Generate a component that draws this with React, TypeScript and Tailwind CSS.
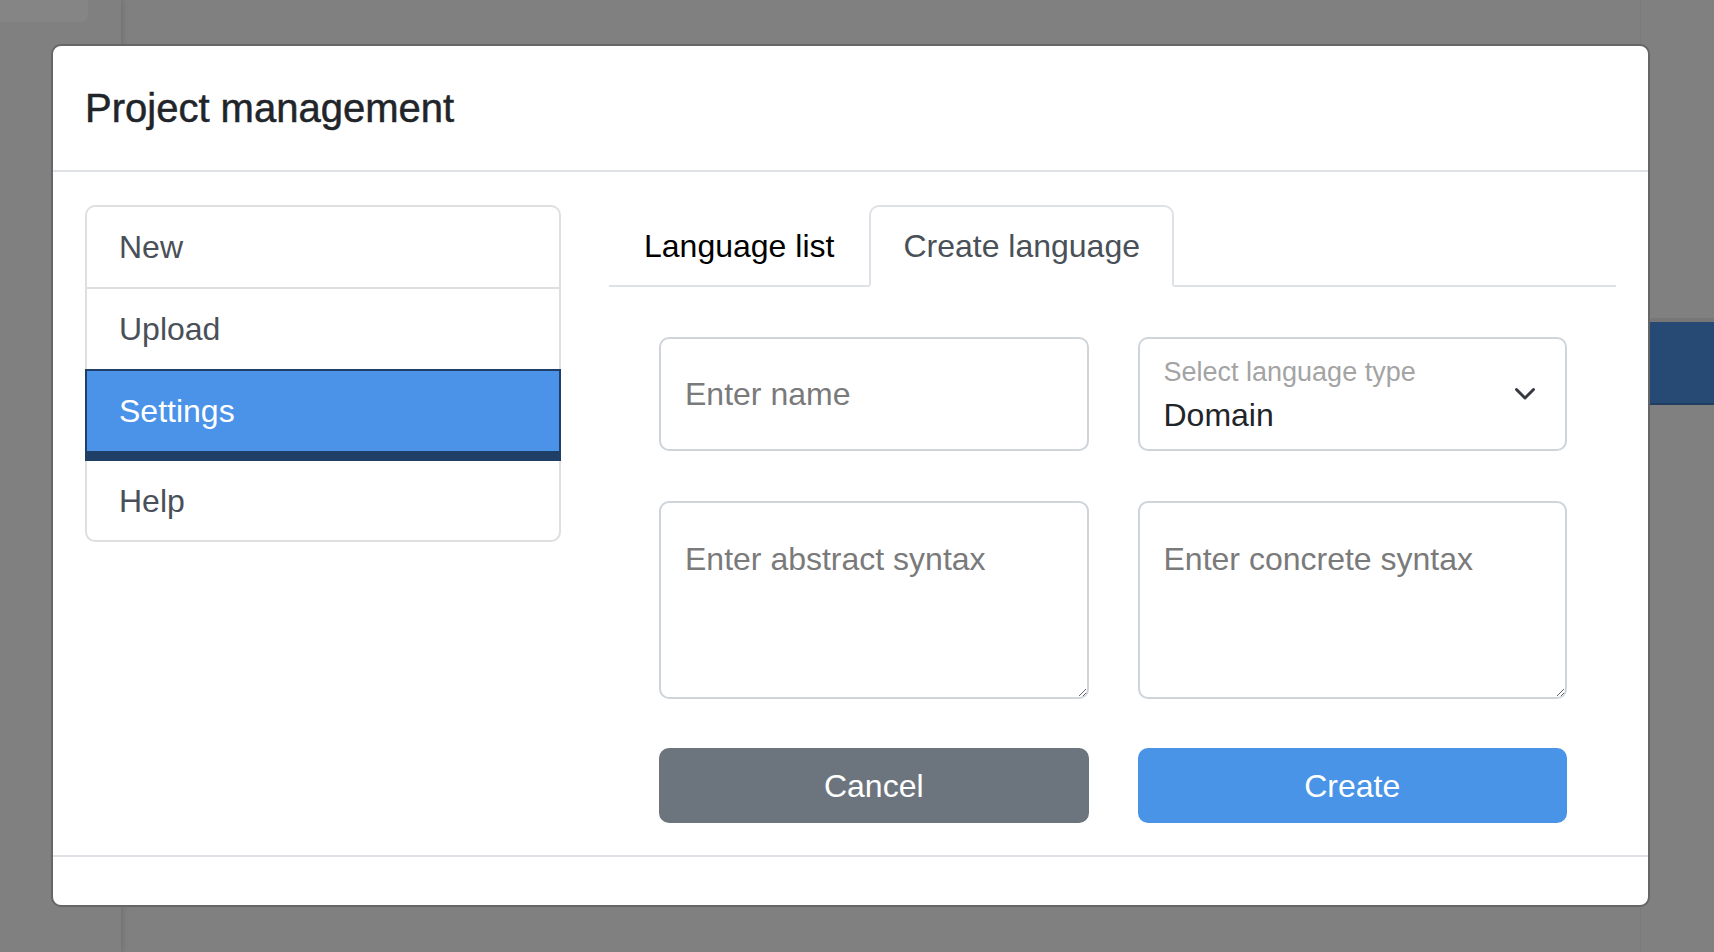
import { useState } from 'react'

const Chevron = () => (
  <svg width="22" height="14" viewBox="0 0 22 14" fill="none">
    <path
      d="M2.5 2.5 L11 11 L19.5 2.5"
      stroke="#343a40"
      strokeWidth="3"
      strokeLinecap="round"
      strokeLinejoin="round"
    />
  </svg>
)

const App = () => {
  const [tab, setTab] = useState<'list' | 'create'>('create')
  const [name, setName] = useState('')

  return (
    <div className="relative h-[952px] w-full overflow-hidden bg-[#808080] font-['Liberation_Sans',Arial,sans-serif]">
      {/* page behind the backdrop */}
      <div className="absolute left-0 top-0 h-full w-[121px] bg-[#808080] shadow-[2px_0_6px_rgba(0,0,0,0.12)]" />
      <div className="absolute left-0 top-0 h-[22px] w-[88px] rounded-br-[8px] bg-[#858585]" />
      <div className="absolute right-0 top-0 h-full w-[74px] border-l border-[#7a7a7a]" />
      <div className="absolute right-0 top-[318px] h-[87px] w-[74px] border-t-[4px] border-b-2 border-t-[#777777] border-b-[#1f3d60] bg-[#274a74]" />

      {/* Modal */}
      <div className="absolute left-[51px] top-[44px] w-[1599px] rounded-[10px] border-2 border-[#666666] bg-white">
        <div className="border-b-2 border-[#dee2e6] px-[32px] py-[32px]">
          <h5 className="text-[40px] font-medium leading-[60px] text-[#212529] [-webkit-text-stroke:0.5px_#212529]">
            Project management
          </h5>
        </div>

        <div className="grid grid-cols-[476px_1fr] items-start gap-x-[48px] px-[32px] pb-[32px] pt-[33px]">
          {/* Menu */}
          <ul className="text-[32px] leading-[48px] text-[#495057]">
            <li className="flex h-[84px] items-center rounded-t-[10px] border-2 border-[#dfdfdf] px-[32px]">
              New
            </li>
            <li className="flex h-[80px] items-center border-x-2 border-[#dfdfdf] px-[32px]">
              Upload
            </li>
            <li className="flex h-[92px] items-center border-2 border-b-[10px] border-[#1f3f66] bg-[#4a93e8] px-[32px] text-white">
              Settings
            </li>
            <li className="flex h-[81px] items-center rounded-b-[10px] border-x-2 border-b-2 border-[#dfdfdf] px-[32px]">
              Help
            </li>
          </ul>

          <div>
            {/* Tabs */}
            <div className="flex border-b-2 border-[#dee2e6]">
              <button
                onClick={() => setTab('list')}
                className={
                  tab === 'list'
                    ? 'mb-[-2px] h-[82px] rounded-t-[10px] border-2 border-[#dee2e6] border-b-white bg-white px-[33px] text-[32px] leading-[48px] text-[#495057]'
                    : 'mb-[-2px] h-[82px] border-2 border-transparent px-[33px] text-[32px] leading-[48px] text-black'
                }
              >
                Language list
              </button>
              <button
                onClick={() => setTab('create')}
                className={
                  tab === 'create'
                    ? 'mb-[-2px] h-[82px] rounded-t-[10px] border-2 border-[#dee2e6] border-b-white bg-white px-[32px] text-[32px] leading-[48px] text-[#495057]'
                    : 'mb-[-2px] h-[82px] border-2 border-transparent px-[32px] text-[32px] leading-[48px] text-black'
                }
              >
                Create language
              </button>
            </div>

            {/* Create form */}
            <div className="grid grid-cols-2 gap-x-[49px] pl-[50px] pr-[49px] pt-[50px]">
              <input
                value={name}
                onChange={(e) => setName(e.target.value)}
                placeholder="Enter name"
                className="h-[114px] rounded-[10px] border-2 border-[#ced4da] px-[24px] text-[32px] text-[#212529] outline-none placeholder:text-[#7a7a7a]"
              />
              <div className="flex h-[114px] items-stretch justify-between rounded-[10px] border-2 border-[#ced4da] pl-[24px] pr-[29px]">
                <div className="pt-[17px]">
                  <div className="text-[27px] leading-[32px] text-[#a4a4a4]">
                    Select language type
                  </div>
                  <div className="mt-[7px] text-[32px] leading-[40px] text-[#212529]">
                    Domain
                  </div>
                </div>
                <div className="flex items-center">
                  <Chevron />
                </div>
              </div>

              <textarea
                placeholder="Enter abstract syntax"
                className="mt-[50px] h-[198px] rounded-[10px] border-2 border-[#ced4da] px-[24px] pt-[32px] text-[32px] leading-[48px] text-[#212529] outline-none placeholder:text-[#7a7a7a]"
              />
              <textarea
                placeholder="Enter concrete syntax"
                className="mt-[50px] h-[198px] rounded-[10px] border-2 border-[#ced4da] px-[24px] pt-[32px] text-[32px] leading-[48px] text-[#212529] outline-none placeholder:text-[#7a7a7a]"
              />

              <button className="mt-[49px] h-[75px] rounded-[10px] border-2 border-[#6c757d] bg-[#6c757d] text-[32px] text-white">
                Cancel
              </button>
              <button className="mt-[49px] h-[75px] rounded-[10px] border-2 border-[#4a94e8] bg-[#4a94e8] text-[32px] text-white">
                Create
              </button>
            </div>
          </div>
        </div>

        <div className="h-[50px] border-t-2 border-[#dee2e6]" />
      </div>
    </div>
  )
}

export default App
